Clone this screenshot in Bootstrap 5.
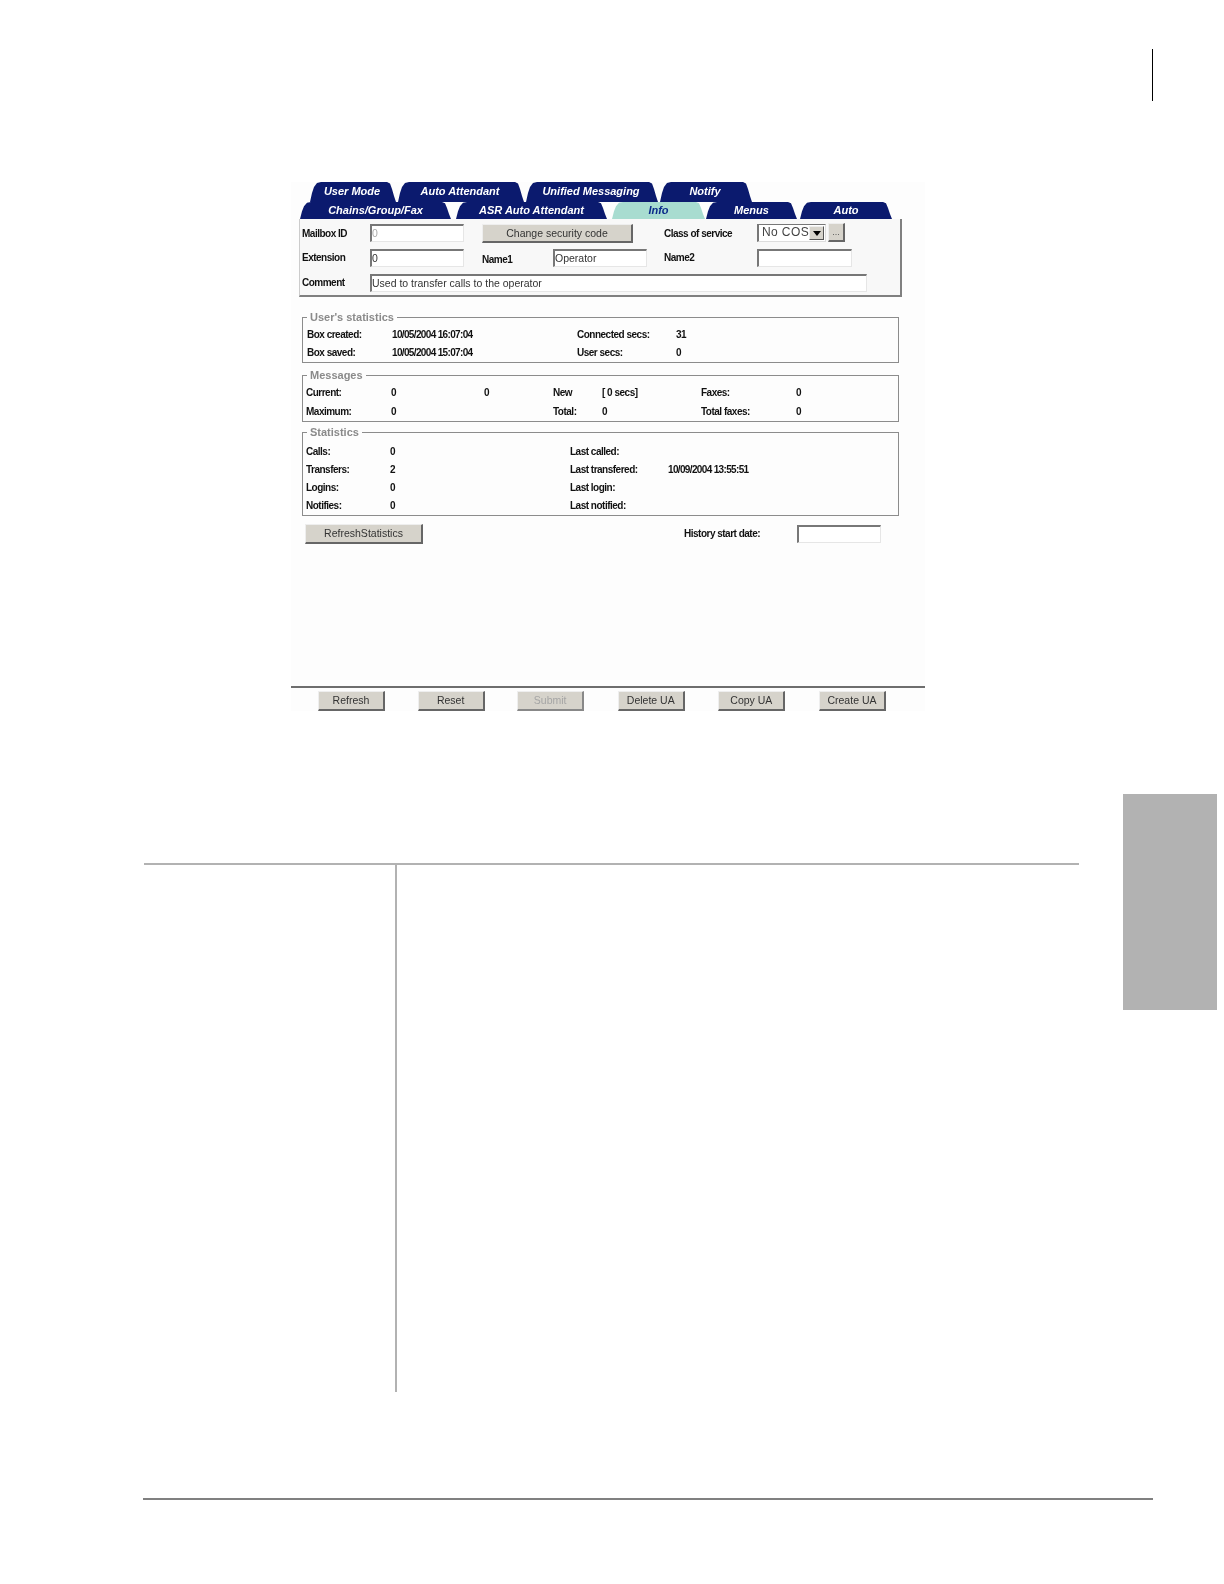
<!DOCTYPE html>
<html lang="en">
<head>
<meta charset="utf-8">
<title>Mailbox info</title>
<link href="https://cdn.jsdelivr.net/npm/bootstrap@5.3.0/dist/css/bootstrap.min.css" rel="stylesheet">
<style>
body{background:#fff;margin:0;height:1584px;overflow:hidden;font-family:"Liberation Sans",Arial,sans-serif;color:#111}
.topmark{width:1px;height:52px;background:#000;margin:49px 0 0 1152px}
.shot{width:634px;height:529px;margin:81px 0 0 291px;background:#fdfdfd;filter:blur(.35px)}
.tabrow{height:20px}
.tabrow2{height:17px}
.tabrow .uitab{padding:0 2px 2px 0}
.ml-r1{margin-left:19px;column-gap:2px}
.ml-r2{margin-left:9px}
.uitab{background:#0b1a6e;color:#fff;font:italic bold 11px/1 "Liberation Sans",Arial,sans-serif;
  clip-path:polygon(0 100%,2px 55%,4px 25%,7px 5%,11px 0,calc(100% - 9px) 0,calc(100% - 6px) 8%,calc(100% - 4px) 35%,calc(100% - 2px) 70%,100% 100%)}
.uitab.on{background:#a8dcd0;color:#0b2a8a}
.t87{width:86px}.t126{width:126px}.t132{width:132px}.t92{width:92px}
.t151{width:151px}.t93{width:93px;margin-left:5px}.t91{width:91px;margin-left:1px}
.t92b{width:92px;margin-left:3px}.gap5{margin-left:5px}
.formbox{width:603px;height:78px;margin-left:8px;background:#f8f8f8;border-left:1px solid #ccc;border-right:2px solid #808080;border-bottom:2px solid #808080;padding:5px 0 0 2px}
.frow{height:25px}
.lbl{font-weight:700;font-size:10px;letter-spacing:-.5px;line-height:1;white-space:nowrap}
.dt{letter-spacing:-.65px}
.pt5{padding-top:5px}.pt6{padding-top:6px}
.l68{width:68px}.l71{width:71px}.l93{width:93px}
.fld{display:block;height:18px;background:#fff;border-style:solid;border-width:2px 1px 1px 2px;border-color:#777 #e6e6e6 #e6e6e6 #777;padding:0 0 2px;font:10.5px/13px "Liberation Sans",Arial,sans-serif;color:#333;outline:0;border-radius:0}
.fld.dim{color:#aaa}
.w94{width:94px}.w95{width:95px}.w497{width:497px}.w84{width:84px}
.ms18{margin-left:18px}.ms17{margin-left:17px}.ms31{margin-left:31px}
.winbtn{--bs-btn-padding-x:0;--bs-btn-padding-y:0;--bs-btn-font-size:10.5px;--bs-btn-border-radius:0;--bs-btn-line-height:1;background:#d6d3cb;color:#333;border-style:solid;border-width:1px 2px 2px 1px;border-color:#eee #666 #666 #eee;font-family:"Liberation Sans",Arial,sans-serif}
.winbtn:disabled{background:#d6d3cb;color:#a5a5a5;border-color:#eee #888 #888 #eee;opacity:1}
.b151{width:151px;height:19px}
.b118{width:118px;height:20px}
.b66{width:67px;height:20px}
.cosbox{width:69px;height:18px;background:#fff;border-style:solid;border-width:1px 1px 1px 2px;border-color:#777 #ddd #ddd #777;font-size:12px;letter-spacing:.4px;color:#444;line-height:15px;padding-left:3px;white-space:nowrap}
.cosarrow{width:15px;height:14px;background:#d6d3cb;border:1px solid;border-color:#eee #555 #555 #eee;margin-top:1px;margin-right:1px}
.cosarrow::after{content:"";border-style:solid;border-width:5px 4px 0;border-color:#000 transparent transparent}
.dots{width:17px;height:19px;margin-left:2px;font-size:9px;color:#555;margin-top:-1px}
.fs{width:597px;margin:0 0 0 11px;padding:0 0 0 4px;border:1px solid #8c8c8c;min-width:0}
.fs legend{float:none;width:auto;margin:0 0 2px 0;padding:0 3px;font:700 11px/14px "Liberation Sans",Arial,sans-serif;color:#8a8a8a}
.fs1{margin-top:13px}
.fs2{margin-top:5px;padding-left:3px}
.fs3{margin-top:3px;padding-left:3px}
.fs2 legend{margin-left:1px}
.fs3 legend{margin:0 0 4px 1px}
.rows{display:grid;grid-auto-rows:18px;align-items:center}
.g1{grid-template-columns:85px 185px 99px 1fr}
.g2{grid-template-columns:85px 93px 69px 49px 99px 95px 1fr;row-gap:1px}
.g3{grid-template-columns:84px 180px 98px 1fr}
.refresh{margin:8px 0 0 14px;width:576px}
.hist{margin-left:261px;width:113px}
.bar{height:25px;border-top:2px solid #6e6e6e;padding:3px 0 0 27px;column-gap:32.6px}
.bar .gapm{margin-left:1px}
.lower{margin-top:83px}
.leftside{width:935px;margin-left:144px;padding-top:69px}
.grid2{height:529px;border-top:2px solid #b2b2b2}
.col1{width:251px}
.col2{border-left:2px solid #b2b2b2;height:527px}
.thumb{width:94px;height:216px;background:#b2b2b2;margin-left:44px}
.footrule{width:1010px;height:2px;background:#808080;margin:106px 0 0 143px}
</style>
</head>
<body>
<div class="topmark"></div>

<div class="shot d-flex flex-column">
  <div class="tabrow d-flex ml-r1">
    <div class="uitab t87 d-flex align-items-center justify-content-center">User Mode</div>
    <div class="uitab t126 d-flex align-items-center justify-content-center">Auto Attendant</div>
    <div class="uitab t132 d-flex align-items-center justify-content-center">Unified Messaging</div>
    <div class="uitab t92 d-flex align-items-center justify-content-center">Notify</div>
  </div>
  <div class="tabrow2 d-flex ml-r2">
    <div class="uitab t151 d-flex align-items-center justify-content-center">Chains/Group/Fax</div>
    <div class="uitab t151 gap5 d-flex align-items-center justify-content-center">ASR Auto Attendant</div>
    <div class="uitab on t93 d-flex align-items-center justify-content-center">Info</div>
    <div class="uitab t91 d-flex align-items-center justify-content-center">Menus</div>
    <div class="uitab t92b d-flex align-items-center justify-content-center">Auto</div>
  </div>

  <div class="formbox">
    <div class="frow d-flex align-items-start">
      <div class="lbl l68 pt5">Mailbox ID</div>
      <input class="fld dim w94" value="0" readonly>
      <button class="btn winbtn b151 ms18" type="button">Change security code</button>
      <div class="lbl l93 ms31 pt5">Class of service</div>
      <div class="cosbox d-flex justify-content-between align-items-start"><span>No COS</span><span class="cosarrow d-flex align-items-center justify-content-center"></span></div>
      <button class="btn winbtn dots" type="button">...</button>
    </div>
    <div class="frow d-flex align-items-start">
      <div class="lbl l68 pt-1">Extension</div>
      <input class="fld w94" value="0" readonly>
      <div class="lbl l71 ms18 pt6">Name1</div>
      <input class="fld w94" value="Operator" readonly>
      <div class="lbl l93 ms17 pt-1">Name2</div>
      <input class="fld w95" value="" readonly>
    </div>
    <div class="frow d-flex align-items-start">
      <div class="lbl l68 pt-1">Comment</div>
      <input class="fld w497" value="Used to transfer calls to the operator" readonly>
    </div>
  </div>

  <fieldset class="fs fs1">
    <legend>User's statistics</legend>
    <div class="rows g1 lbl">
      <div>Box created:</div><div class="dt">10/05/2004 16:07:04</div><div>Connected secs:</div><div>31</div>
      <div>Box saved:</div><div class="dt">10/05/2004 15:07:04</div><div>User secs:</div><div>0</div>
    </div>
  </fieldset>

  <fieldset class="fs fs2">
    <legend>Messages</legend>
    <div class="rows g2 lbl">
      <div>Current:</div><div>0</div><div>0</div><div>New</div><div>[ 0 secs]</div><div>Faxes:</div><div>0</div>
      <div>Maximum:</div><div>0</div><div></div><div>Total:</div><div>0</div><div>Total faxes:</div><div>0</div>
    </div>
  </fieldset>

  <fieldset class="fs fs3">
    <legend>Statistics</legend>
    <div class="rows g3 lbl">
      <div>Calls:</div><div>0</div><div>Last called:</div><div></div>
      <div>Transfers:</div><div>2</div><div>Last transfered:</div><div class="dt">10/09/2004 13:55:51</div>
      <div>Logins:</div><div>0</div><div>Last login:</div><div></div>
      <div>Notifies:</div><div>0</div><div>Last notified:</div><div></div>
    </div>
  </fieldset>

  <div class="refresh d-flex align-items-center">
    <button class="btn winbtn b118" type="button">RefreshStatistics</button>
    <div class="lbl hist">History start date:</div>
    <input class="fld w84" value="" readonly>
  </div>

  <div class="bar d-flex mt-auto">
    <button class="btn winbtn b66" type="button">Refresh</button>
    <button class="btn winbtn b66" type="button">Reset</button>
    <button class="btn winbtn b66" type="button" disabled>Submit</button>
    <button class="btn winbtn b66 gapm" type="button">Delete UA</button>
    <button class="btn winbtn b66 gapm" type="button">Copy UA</button>
    <button class="btn winbtn b66 gapm" type="button">Create UA</button>
  </div>
</div>

<div class="lower d-flex align-items-start">
  <div class="leftside">
    <div class="grid2 d-flex">
      <div class="col1"></div>
      <div class="col2 flex-grow-1"></div>
    </div>
  </div>
  <div class="thumb"></div>
</div>

<div class="footrule"></div>

<script src="https://cdn.jsdelivr.net/npm/bootstrap@5.3.0/dist/js/bootstrap.bundle.min.js"></script>
</body>
</html>
